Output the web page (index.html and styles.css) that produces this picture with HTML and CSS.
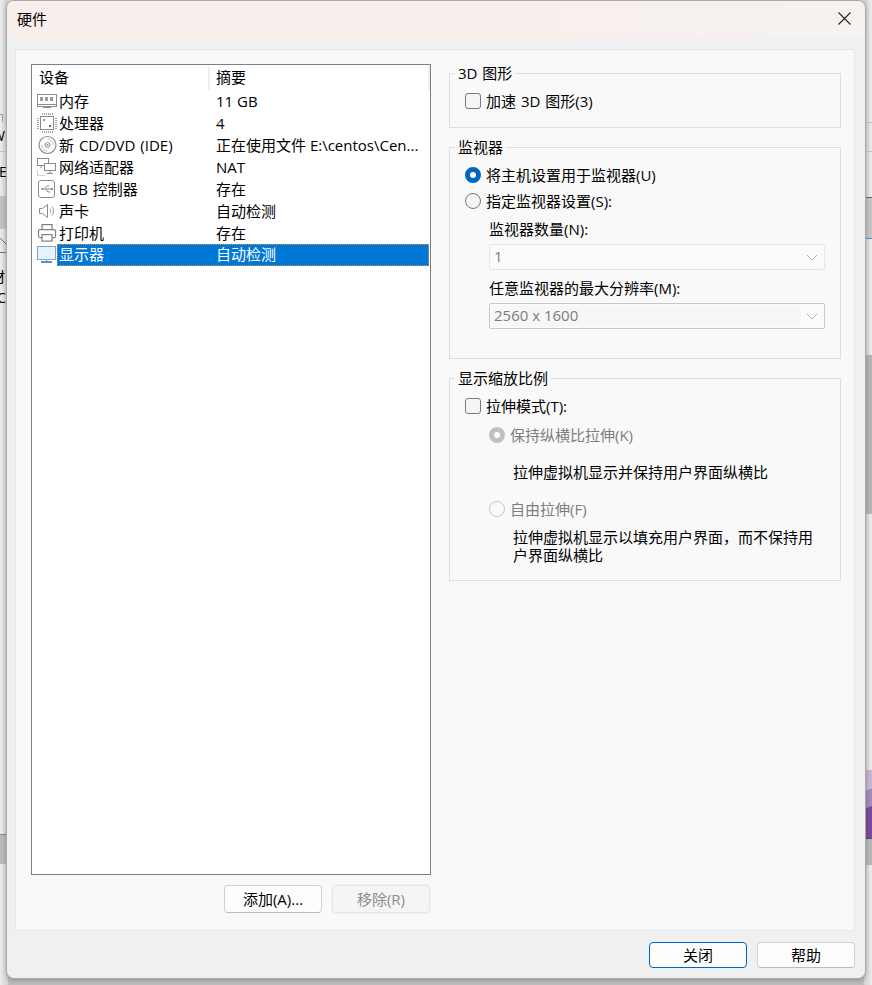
FILE: index.html
```html
<!DOCTYPE html>
<html lang="zh-CN">
<head>
<meta charset="utf-8">
<title>硬件</title>
<link rel="stylesheet" href="styles.css">
</head>
<body>
<div class="desk">
  <div class="left-strip">
    <i class="mark"></i>
    <span class="frag f-w">W</span>
    <span class="frag f-e">E</span>
    <svg class="caret" width="8" height="8" viewBox="0 0 8 8"><path d="M0 1l6 6" stroke="#666" fill="none"/></svg>
    <span class="frag f-c">材</span>
    <span class="frag f-o">C</span>
    <i class="ln l1"></i><i class="blk b1"></i><i class="ln l2"></i><i class="ln l3"></i><i class="blk b2"></i>
  </div>
  <div class="right-strip">
    <i class="ln r1"></i><i class="ln r2"></i><i class="blk r3"></i><i class="blk r4"></i><i class="blk r5"></i><i class="blk r6"></i>
  </div>
</div>
<section class="dialog">
  <header class="titlebar">
    <span class="title">硬件</span>
    <svg class="close" width="13" height="13" viewBox="0 0 13 13"><path d="M.5.5L12.500 12.500M12.500.5L.5 12.500" stroke="#222" stroke-width="1.1" fill="none"/></svg>
  </header>
  <main class="panel">
    <div class="col-left">
      <div class="listbox">
        <div class="row head"><span class="hcell first">设备</span><span class="hcell">摘要</span></div>
        <div class="row">
          <svg class="ico" width="22" height="16" viewBox="0 0 22 16"><g fill="none" stroke="#8b8b8b"><rect x="1.500" y="1.500" width="19" height="12"/><path d="M1.500 11.500h19M7 14.500h8"/></g><path d="M4 4h3v4H4zM9 4h3v4H9zM14 4h3v4h-3z" fill="#9a9a9a"/></svg>
          <span class="name">内存</span><span class="val">11 GB</span>
        </div>
        <div class="row">
          <svg class="ico" width="22" height="22" viewBox="0 0 22 22"><rect x="4.500" y="4.500" width="13" height="13" fill="#fff" stroke="#8b8b8b"/><path d="M6.500 1v2M8.500 1v2M10.500 1v2M12.500 1v2M14.500 1v2M16.500 1v2M6.500 19v2M8.500 19v2M10.500 19v2M12.500 19v2M14.500 19v2M16.500 19v2M1 6.500h2M1 8.500h2M1 10.500h2M1 12.500h2M1 14.500h2M1 16.500h2M19 6.500h2M19 8.500h2M19 10.500h2M19 12.500h2M19 14.500h2M19 16.500h2" stroke="#a2a2a2" fill="none"/><rect x="7" y="7" width="2" height="2" fill="#999"/><rect x="13" y="13" width="2" height="2" fill="#666"/></svg>
          <span class="name">处理器</span><span class="val">4</span>
        </div>
        <div class="row">
          <svg class="ico" width="22" height="22" viewBox="0 0 22 22"><g fill="none" stroke="#8f8f8f"><circle cx="11.500" cy="11" r="8.500" stroke-width="1.200"/><circle cx="11.500" cy="11" r="2.500"/><path d="M11.500 5a6 6 0 0 1 6 6" stroke="#bbb"/><path d="M11.500 17a6 6 0 0 1-6-6" stroke="#bbb"/></g><circle cx="11.500" cy="11" r="1" fill="#8f8f8f"/></svg>
          <span class="name">新 CD/DVD (IDE)</span><span class="val">正在使用文件 E:\centos\Cen...</span>
        </div>
        <div class="row">
          <svg class="ico" width="22" height="20" viewBox="0 0 22 20"><g fill="#fff" stroke="#8b8b8b"><rect x="1.500" y="1.500" width="11" height="7"/><rect x="8.500" y="6.500" width="11" height="7"/></g><path d="M14 13.500v3M11 16.500h6M5 9v2" stroke="#8b8b8b" fill="none"/><path d="M1.500 13v6M1.500 18.500h8" stroke="#aaa" stroke-dasharray="1 1" fill="none"/></svg>
          <span class="name">网络适配器</span><span class="val">NAT</span>
        </div>
        <div class="row">
          <svg class="ico" width="22" height="20" viewBox="0 0 22 20"><rect x="2.500" y="1.500" width="16" height="17" rx="2.500" fill="#fff" stroke="#8b8b8b"/><path d="M5.500 10h10M8 10l3-3h2M10 10l2 3h2" stroke="#8b8b8b" fill="none"/><path d="M5 10l2-1.500v3z M15 9h2v2h-2z" fill="#8b8b8b"/></svg>
          <span class="name">USB 控制器</span><span class="val">存在</span>
        </div>
        <div class="row">
          <svg class="ico" width="22" height="18" viewBox="0 0 22 18"><path d="M3.500 6.500h3l5-4v13l-5-4h-3z" fill="#fff" stroke="#8b8b8b"/><path d="M14 6.500a4 4 0 0 1 0 5M16 4.500a7 7 0 0 1 0 9" fill="none" stroke="#9c9c9c"/></svg>
          <span class="name">声卡</span><span class="val">自动检测</span>
        </div>
        <div class="row">
          <svg class="ico" width="22" height="20" viewBox="0 0 22 20"><g fill="#fff" stroke="#7f7f7f" stroke-width="1.200"><rect x="6" y="1.600" width="10" height="5"/><rect x="2.500" y="6.600" width="17" height="8" rx="1.500"/><rect x="6" y="11.600" width="10" height="6.500"/></g></svg>
          <span class="name">打印机</span><span class="val">存在</span>
        </div>
        <div class="row sel">
          <svg class="ico" width="22" height="20" viewBox="0 0 22 20"><rect x="1.500" y="1.500" width="18" height="13" fill="#e7f2fb" stroke="#7ea6c6"/><path d="M5 17h11" stroke="#4f96cf" stroke-width="2"/><path d="M10.500 15v1" stroke="#7ea6c6"/></svg>
          <span class="name selname">显示器</span><span class="val selval">自动检测</span>
        </div>
      </div>
      <div class="list-actions">
        <button class="btn" type="button">添加(A)...</button>
        <button class="btn off" type="button">移除(R)</button>
      </div>
    </div>
    <div class="col-right">
      <div class="group g1">
        <span class="legend">3D 图形</span>
        <label class="opt"><span class="check"></span>加速 3D 图形(3)</label>
      </div>
      <div class="group g2">
        <span class="legend">监视器</span>
        <label class="opt o1"><span class="radio on"></span>将主机设置用于监视器(U)</label>
        <label class="opt o2"><span class="radio"></span>指定监视器设置(S):</label>
        <div class="field f1">
          <div class="flabel">监视器数量(N):</div>
          <div class="combo c-flat"><span class="cone">1</span><svg width="12" height="7" viewBox="0 0 12 7"><path d="M1 1l5 5 5-5" fill="none" stroke="#b5b5b5"/></svg></div>
        </div>
        <div class="field f2">
          <div class="flabel">任意监视器的最大分辨率(M):</div>
          <div class="combo c-line"><span class="cval">2560 x 1600</span><svg width="12" height="7" viewBox="0 0 12 7"><path d="M1 1l5 5 5-5" fill="none" stroke="#b5b5b5"/></svg></div>
        </div>
      </div>
      <div class="group g3">
        <span class="legend">显示缩放比例</span>
        <label class="opt"><span class="check"></span>拉伸模式(T):</label>
        <label class="opt sub dim s1"><span class="radio dis-on"></span>保持纵横比拉伸(K)</label>
        <p class="desc d1">拉伸虚拟机显示并保持用户界面纵横比</p>
        <label class="opt sub dim s2"><span class="radio dis"></span>自由拉伸(F)</label>
        <p class="desc d2">拉伸虚拟机显示以填充用户界面，而不保持用户界面纵横比</p>
      </div>
    </div>
  </main>
  <footer class="footer">
    <button class="btn focus" type="button">关闭</button>
    <button class="btn" type="button">帮助</button>
  </footer>
</section>
</body>
</html>
```
FILE: styles.css
```css
* { box-sizing: border-box; }
html, body { margin: 0; padding: 0; }
body {
  width: 872px;
  height: 985px;
  overflow: hidden;
  position: relative;
  background: #bdbdbd;
  font-family: "Open Sans", "Noto Sans CJK SC", sans-serif;
  font-size: 15px;
  color: #000;
}
.desk { position: absolute; inset: 0; background: linear-gradient(#d9d9d9, #bcbcbc 985px); }
.left-strip, .right-strip { position: absolute; top: 0; bottom: 0; overflow: hidden; }
.left-strip { left: 0; width: 8px; background: linear-gradient(90deg, #ececec, #cfcfcf); }
.right-strip { right: 0; width: 8px; background: linear-gradient(90deg, #cfcfcf, #ececec); }
.frag { position: absolute; font-size: 14px; line-height: 20px; }
.f-w { left: -8px; top: 126px; }
.f-e { left: -1px; top: 162px; }
.f-c { left: -9px; top: 267px; }
.f-o { left: -3px; top: 288px; }
.mark { position: absolute; left: -2px; top: 114px; width: 5px; height: 8px; border: 1px solid #8ea3b5; border-bottom: 0; }
.caret { position: absolute; left: 0; top: 237px; }
.ln, .blk { position: absolute; left: 0; right: 0; display: block; }
.ln { height: 1px; background: #c4c4c4; }
.l1 { top: 151px; }
.l2 { top: 228px; }
.l3 { top: 252px; background: #777; }
.b1 { top: 196px; height: 33px; background: #bfc0c2; }
.b2 { top: 834px; height: 30px; background: linear-gradient(#8a8a8a 1px, #b8b9bb 1px); }
.r1 { top: 122px; }
.r2 { top: 151px; }
.r3 { top: 197px; height: 42px; background: #c3c4c5; border-top: 1px solid #666; border-bottom: 1px solid #4a94cc; }
.r4 { top: 355px; height: 159px; background: #b4b4b4; }
.r5 { top: 770px; height: 68px; background: linear-gradient(160deg, #c4b3d3 0 30%, #a58ab9 30% 55%, #7a4a9a 55%); }
.r6 { top: 838px; height: 27px; background: #b6b6b6; border-top: 1px solid #5b4a70; }

.dialog {
  position: absolute;
  left: 6px;
  top: 0;
  width: 860px;
  height: 979px;
  display: flex;
  flex-direction: column;
  background: #f0f0f0;
  border: 1px solid #a9a9a9;
  border-radius: 8px;
  overflow: hidden;
  box-shadow: 0 1px 4px rgba(0,0,0,.25);
}
.titlebar {
  flex: none;
  height: 37px;
  display: flex;
  align-items: center;
  justify-content: space-between;
  padding: 0 14px 2px 10px;
  background: linear-gradient(90deg, #f8efec, #f8efec 55%, #f5f2f0);
}
.panel {
  flex: none;
  height: 882px;
  margin: 11px 10px 0 8px;
  padding: 14px 14px 0 15px;
  display: flex;
  gap: 18px;
  background: #f9f9f9;
  border: 1px solid #e6e6e6;
}
.col-left { width: 400px; flex: none; }
.col-right { width: 392px; flex: none; padding-top: 9px; display: flex; flex-direction: column; gap: 19px; }
.listbox {
  height: 811px;
  background: #fff;
  border: 1px solid #7a8088;
  padding: 1px 1px 0;
}
.row {
  height: 22px;
  display: flex;
  align-items: center;
  position: relative;
  white-space: nowrap;
  line-height: 22px;
}
.row.head { height: 24px; align-items: flex-start; }
.hcell { width: 177px; padding-left: 6px; height: 24px; border-right: 2px solid #eeeeee; flex: none; line-height: 23px; }
.hcell + .hcell { width: 220px; padding-left: 6px; }
.ico { width: 22px; flex: none; margin-left: 3px; }
.name { width: 158px; flex: none; padding: 0 0 0 1px; word-spacing: 1px; }
.val { flex: none; }
.sel { color: #fff; }
.selname, .selval { background: #0078d7; height: 22px; line-height: 19px; }
.selname { margin-left: -1px; padding-left: 1px; border: 1px dotted #d98a3a; border-right: 0; width: 159px; }
.selval { width: 213px; border: 1px dotted #d98a3a; border-left: 0; }
.list-actions { display: flex; justify-content: flex-end; gap: 10px; margin-top: 10px; padding-right: 1px; }
.btn {
  width: 98px;
  height: 28px;
  padding: 0 0 2px;
  background: #fdfdfd;
  border: 1px solid #d0d0d0;
  border-bottom-color: #bcbcbc;
  border-radius: 4px;
  font: inherit;
  color: #000;
}
.btn.off { background: #f5f5f5; border-color: #e6e6e6; color: #8c8c8c; outline: 1px solid #f0f0f0; }
.btn.focus { border: 1px solid #0067c0; }
.footer { flex: none; display: flex; justify-content: flex-end; gap: 10px; padding: 11px 10px 0 0; }
.footer .btn { height: 26px; }

.group { position: relative; border: 1px solid #dedede; padding-left: 15px; }
.legend { position: absolute; left: 5px; top: -11px; line-height: 20px; padding: 0 3px; background: #f9f9f9; word-spacing: 1px; }
.g1 { height: 55px; padding-top: 16px; }
.g2 { height: 212px; }
.g3 { height: 203px; padding-top: 16px; }
.opt { display: flex; align-items: center; gap: 5px; line-height: 22px; height: 22px; word-spacing: 1px; }
.o1 { margin-top: 16px; }
.o2 { margin-top: 4px; }
.sub { margin-left: 24px; }
.dim { color: #7d7d7d; }
.s1 { margin-top: 7px; }
.s2 { margin-top: 17px; }
.check { width: 16px; height: 16px; border: 1px solid #7a7a7a; border-radius: 3px; background: #f5f5f5; flex: none; }
.radio { width: 16px; height: 16px; border: 1px solid #7a7a7a; border-radius: 50%; background: #f5f5f5; flex: none; }
.radio.on { border: 5px solid #0067c0; background: #fff; }
.radio.dis-on { border: 5px solid #c0c0c0; background: #fff; }
.radio.dis { border-color: #c6c6c6; background: transparent; }
.field { margin-left: 24px; width: 336px; }
.f1 { margin-top: 6px; }
.f2 { margin-top: 7px; }
.flabel { line-height: 22px; height: 22px; }
.combo {
  height: 26px;
  margin-top: 4px;
  display: flex;
  align-items: center;
  justify-content: space-between;
  padding: 0 6px 0 4px;
  color: #7d7d7d;
  border-radius: 2px;
}
.cone { padding-bottom: 2px; }
.c-flat { border: 1px solid #e6e6e6; background: #fbfbfb; }
.c-line { border: 1px solid #c8c8c8; background: #fbfbfb; padding-left: 2px; }
.cval { display: block; width: 309px; height: 20px; line-height: 18px; background: #f7f7f7; padding-left: 2px; }
.desc { margin: 0 0 0 48px; width: 310px; line-height: 18px; }
.d1 { margin-top: 17px; }
.d2 { margin-top: 8px; }
```
